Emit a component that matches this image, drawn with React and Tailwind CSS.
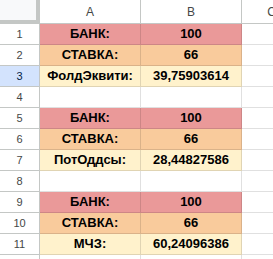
import React from "react";

const RED = "bg-[#ea9999]";
const ORANGE = "bg-[#f9cb9c]";
const CREAM = "bg-[#fff2cc]";

const rows = [
  { n: 1, a: "БАНК:", b: "100", bg: RED },
  { n: 2, a: "СТАВКА:", b: "66", bg: ORANGE },
  { n: 3, a: "ФолдЭквити:", b: "39,75903614", bg: CREAM, selected: true },
  { n: 4 },
  { n: 5, a: "БАНК:", b: "100", bg: RED },
  { n: 6, a: "СТАВКА:", b: "66", bg: ORANGE },
  { n: 7, a: "ПотОддсы:", b: "28,44827586", bg: CREAM },
  { n: 8 },
  { n: 9, a: "БАНК:", b: "100", bg: RED },
  { n: 10, a: "СТАВКА:", b: "66", bg: ORANGE },
  { n: 11, a: "МЧЗ:", b: "60,24096386", bg: CREAM },
  { n: 12 },
];

function RowHead({ n, selected }) {
  return (
    <div
      className={
        "h-[21px] flex items-center justify-center border-b border-r border-[#c4c7c5] text-[11px] " +
        (selected ? "bg-[#d3e3fd] text-[#041e49]" : "bg-white text-[#444746]")
      }
    >
      {n}
    </div>
  );
}

function Cell({ children, bg }) {
  return (
    <div
      className={
        "h-[21px] flex items-center justify-center border-b border-r border-black/[0.12] font-bold text-[13px] text-black " +
        (bg || "bg-white")
      }
    >
      {children}
    </div>
  );
}

export default function App() {
  return (
    <div
      className="w-[273px] h-[259px] overflow-hidden bg-white"
      style={{ fontFamily: '"Liberation Sans", Arial, sans-serif' }}
    >
      <div className="grid grid-cols-[40px_101px_101px_60px]">
        {/* шапка */}
        <div className="h-[24px] bg-[#f8f9fa] border-r-4 border-b-4 border-[#c4c7c5]" />
        <div className="h-[24px] flex items-center justify-center border-b border-r border-[#c4c7c5] text-[12px] text-[#444746]">A</div>
        <div className="h-[24px] flex items-center justify-center border-b border-r border-[#c4c7c5] text-[12px] text-[#444746]">B</div>
        <div className="h-[24px] flex items-center justify-center border-b border-r border-[#c4c7c5] text-[12px] text-[#444746]">C</div>

        {rows.map((r) => (
          <React.Fragment key={r.n}>
            <RowHead n={r.n} selected={r.selected} />
            <Cell bg={r.bg}>{r.a}</Cell>
            <Cell bg={r.bg}>{r.b}</Cell>
            <Cell />
          </React.Fragment>
        ))}
      </div>
    </div>
  );
}
